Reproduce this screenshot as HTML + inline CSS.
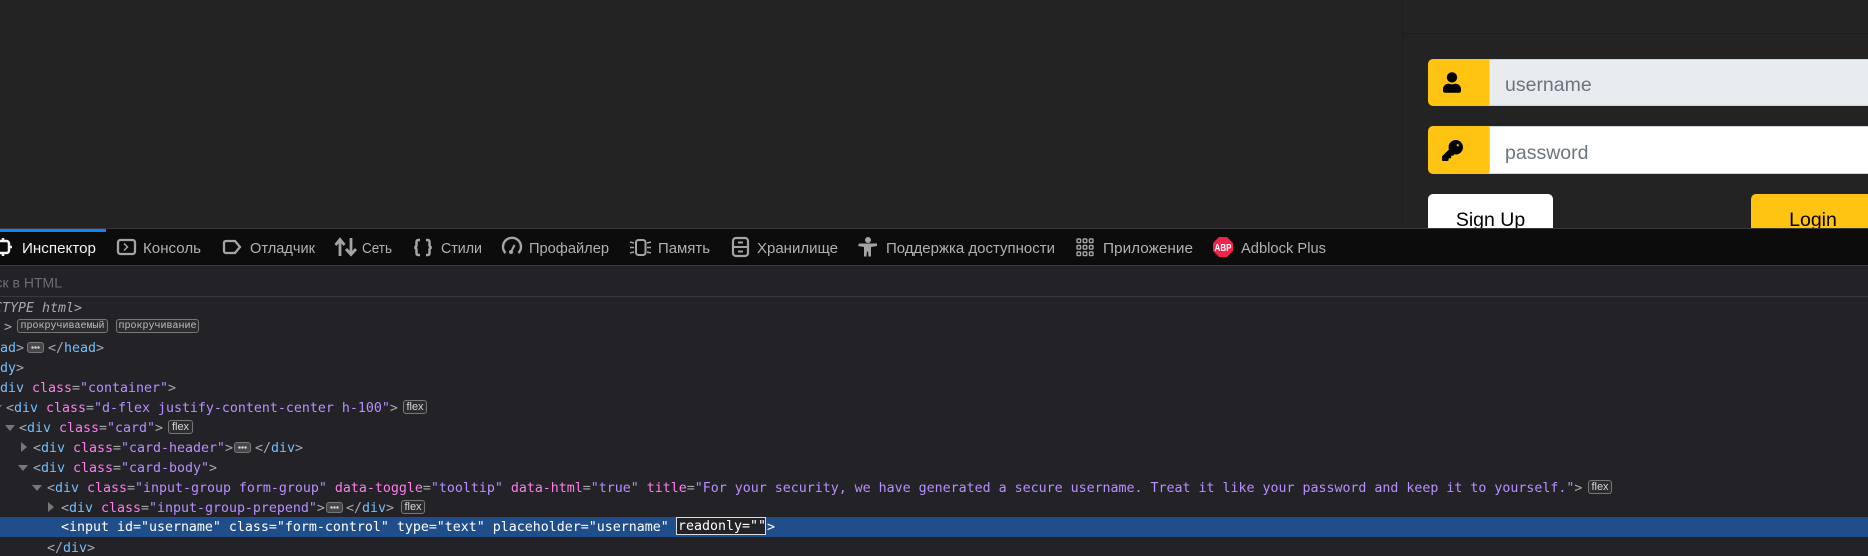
<!DOCTYPE html>
<html><head><meta charset="utf-8"><style>
html,body{margin:0;padding:0;background:#232323;width:1868px;height:556px;overflow:hidden}
#p{position:relative;width:1868px;height:556px;overflow:hidden;font-family:"Liberation Sans",sans-serif}
.a{position:absolute}
.tb{position:absolute;left:0;top:229px;width:1868px;height:36px;background:#0c0c0d;border-bottom:1px solid #38383d;box-sizing:content-box}
.r{position:absolute;height:20px;margin-top:1px;font:13.29px/20px "DejaVu Sans Mono",monospace;white-space:pre;color:#a9a9ac}
.t{color:#75bfff}.n{color:#ff7de9}.v{color:#b98eff}
.b{position:absolute;box-sizing:border-box;border:1px solid #77777a;border-radius:3px;background:#2c2c30;color:#d8d8da;font:11px/13px "Liberation Sans",sans-serif;text-align:center;height:14px}
.m{font:10px/14px "Liberation Mono",monospace;color:#bdbdbf}
.d{position:absolute;box-sizing:border-box;width:17px;height:11px;border:1px solid #77777a;border-radius:3px;background:#47474b}
.d:before{content:"";position:absolute;left:3px;top:3px;width:9px;height:3px;background:radial-gradient(circle at 1.5px 1.5px,#ddd 1.2px,transparent 1.3px) 0 0/3px 3px repeat-x}
.ar{position:absolute;width:0;height:0}
.dn{border-left:5px solid transparent;border-right:5px solid transparent;border-top:6px solid #77777a}
.rt{border-top:5px solid transparent;border-bottom:5px solid transparent;border-left:6px solid #77777a}
</style></head><body><div id="p">
<div class="a" style="left:1402px;top:0;width:1px;height:229px;background:#1e1e1e"></div>
<div class="a" style="left:1402px;top:33px;width:466px;height:1px;background:#1e1e1e"></div>

<div class="a" style="left:1428px;top:59px;width:61px;height:47px;background:#ffc312;border-radius:5px 0 0 5px"></div>
<div class="a" style="left:1489px;top:59px;width:379px;height:47px;background:#e9ecef;box-sizing:border-box;border:1px solid #ced4da;border-right:0"></div>
<div class="a" style="left:1505px;top:62px;line-height:47px;font-size:19.5px;color:#6c757d">username</div>
<svg class="a" style="left:1443px;top:72px" width="18" height="21" viewBox="0 0 448 512"><path d="M224 256c70.7 0 128-57.3 128-128S294.7 0 224 0 96 57.3 96 128s57.3 128 128 128zm89.6 32h-16.7c-22.2 10.2-46.9 16-72.9 16s-50.6-5.8-72.9-16h-16.7C60.2 288 0 348.2 0 422.4V464c0 26.5 21.5 48 48 48h352c26.5 0 48-21.5 48-48v-41.6c0-74.2-60.2-134.4-134.4-134.4z" fill="#000"/></svg>

<div class="a" style="left:1428px;top:126px;width:61px;height:48px;background:#ffc312;border-radius:5px 0 0 5px"></div>
<div class="a" style="left:1489px;top:126px;width:379px;height:48px;background:#fff;box-sizing:border-box;border:1px solid #ced4da;border-right:0"></div>
<div class="a" style="left:1505px;top:130px;line-height:47px;font-size:19.5px;color:#6c757d">password</div>
<svg class="a" style="left:1442px;top:140px" width="21" height="21" viewBox="0 0 512 512"><path fill-rule="evenodd" d="M512 176.001C512 273.203 433.202 352 336 352c-11.22 0-22.19-1.062-32.827-3.069l-24.012 27.014A23.999 23.999 0 0 1 261.223 384H224v40c0 13.255-10.745 24-24 24h-40v40c0 13.255-10.745 24-24 24H24c-13.255 0-24-10.745-24-24v-78.059c0-6.365 2.529-12.47 7.029-16.971l161.802-161.802C163.108 213.814 160 195.271 160 176 160 78.798 238.797.001 335.999 0 433.488-.001 512 78.511 512 176.001zM356 128a28 28 0 1 0 56 0a28 28 0 1 0-56 0z" fill="#000"/></svg>

<div class="a" style="left:1428px;top:194px;width:125px;height:40px;background:#fff;border-radius:5px;color:#000;font-size:19.5px;line-height:53px;text-align:center">Sign Up</div>
<div class="a" style="left:1751px;top:194px;width:124px;height:40px;background:#ffc312;border-radius:5px 0 0 5px;color:#000;font-size:19.5px;line-height:53px;text-align:center">Login</div>

<div class="a" style="left:0;top:228px;width:1868px;height:1px;background:#38383d"></div>
<div class="tb"></div>
<div class="a" style="left:0;top:229px;width:106px;height:3px;background:#0a84ff"></div>

<svg class="a" style="left:0;top:229px" width="1868" height="36" font-family="Liberation Sans, sans-serif" font-size="14.4" fill="#b1b1b3">
<text x="22" y="24" textLength="74" lengthAdjust="spacingAndGlyphs" fill="#f5f5f5">Инспектор</text>
<text x="143" y="24" textLength="58" lengthAdjust="spacingAndGlyphs">Консоль</text>
<text x="250" y="24" textLength="65" lengthAdjust="spacingAndGlyphs">Отладчик</text>
<text x="362" y="24" textLength="30" lengthAdjust="spacingAndGlyphs">Сеть</text>
<text x="441" y="24" textLength="41" lengthAdjust="spacingAndGlyphs">Стили</text>
<text x="529" y="24" textLength="80" lengthAdjust="spacingAndGlyphs">Профайлер</text>
<text x="658" y="24" textLength="52" lengthAdjust="spacingAndGlyphs">Память</text>
<text x="757" y="24" textLength="81" lengthAdjust="spacingAndGlyphs">Хранилище</text>
<text x="886" y="24" textLength="169" lengthAdjust="spacingAndGlyphs">Поддержка доступности</text>
<text x="1103" y="24" textLength="90" lengthAdjust="spacingAndGlyphs">Приложение</text>
<text x="1241" y="24" textLength="85" lengthAdjust="spacingAndGlyphs">Adblock Plus</text>
<g fill="none" stroke="#f5f5f5" stroke-width="2.5">
<rect x="-3" y="12" width="12" height="12" rx="2.500"/><path d="M3 9v3M3 24v3M9 18h3"/>
</g>
<g fill="none" stroke="#a4a4a6" stroke-width="2.3">
<rect x="118" y="11" width="17" height="14" rx="2.500"/><path d="M124 14.500l3.500 3.500-3.500 3.500" stroke-width="1.500"/>
<path d="M224 14a2 2 0 0 1 2-2h9l5 6-5 6h-9a2 2 0 0 1-2-2z"/>
<g stroke-width="2.800"><path d="M340 27V11M335.500 16l4.500-5.500 4.500 5.500M351 9v16M346 20l5 5.500 5-5.500"/></g>
<g stroke-width="2.500"><path d="M420 11h-1.500q-2 0-2 2v3q0 2-2 2.500 2 .5 2 2.500v3q0 2 2 2h1.500M426 11h1.500q2 0 2 2v3q0 2 2 2.500-2 .5-2 2.500v3q0 2-2 2h-1.500"/></g>
<path d="M505.500 24a9 9 0 1 1 13 0" stroke-width="2.400"/><path d="M511 23l3.500-7" stroke-width="2"/><circle cx="511" cy="23" r="2" fill="#a4a4a6" stroke="none"/>
<rect x="636" y="11" width="9.500" height="15" rx="2.500" stroke-width="2"/><path d="M630 13l4 1M630 18.500h4M630 24l4-1M647 14l4-1M647 18.500h4M647 23l4 1" stroke-width="1.500"/>
<rect x="733" y="9" width="15" height="18" rx="3" stroke-width="2.200"/><path d="M733 18h15M738 13.500h5M738 22.500h5" stroke-width="2"/>
<g stroke="none" fill="#a4a4a6"><circle cx="868" cy="11" r="3"/><path d="M859 14.500h18v2.500l-6 1v9.500h-2.500l-.5-5h-1l-.5 5h-2.500v-9.500l-6-1z"/></g>
<g stroke-width="1.400"><rect x="1077" y="10" width="3.600" height="3.600" rx=".8"/><rect x="1083.200" y="10" width="3.600" height="3.600" rx=".8"/><rect x="1089.400" y="10" width="3.600" height="3.600" rx=".8"/><rect x="1077" y="16.500" width="3.600" height="3.600" rx=".8"/><rect x="1083.200" y="16.500" width="3.600" height="3.600" rx=".8"/><rect x="1089.400" y="16.500" width="3.600" height="3.600" rx=".8"/><rect x="1077" y="23" width="3.600" height="3.600" rx=".8"/><rect x="1083.200" y="23" width="3.600" height="3.600" rx=".8"/><rect x="1089.400" y="23" width="3.600" height="3.600" rx=".8"/></g>
</g>
<path d="M1219 8h8l6 6v8l-6 6h-8l-6-6v-8z" fill="#ee2448"/>
<text x="1214.500" y="22" font-size="10.500" font-weight="bold" fill="#fff" textLength="17" lengthAdjust="spacingAndGlyphs">ABP</text>
</svg>

<div class="a" style="left:0;top:266px;width:1868px;height:290px;background:#232327"></div>
<div class="a" style="left:0;top:296px;width:1868px;height:1px;background:#38383d"></div>
<svg class="a" style="left:0;top:270px" width="80" height="24" font-family="Liberation Sans, sans-serif" font-size="14" fill="#6e6e72"><text x="62" y="17.500" text-anchor="end">Поиск в HTML</text></svg>

<div class="r" style="left:-38px;top:298px;font-style:italic;color:#a9a9ac">&lt;!DOCTYPE html&gt;</div>
<div class="r" style="left:4px;top:317px">&gt;</div>
<div class="b m" style="left:17px;top:319px;width:91px">прокручиваемый</div>
<div class="b m" style="left:116px;top:319px;width:83px">прокручивание</div>

<div class="r" style="left:-24px;top:338px">&lt;<span class="t">head</span>&gt;</div>
<div class="d" style="left:27px;top:342px"></div>
<div class="r" style="left:48px;top:338px">&lt;/<span class="t">head</span>&gt;</div>

<div class="r" style="left:-24px;top:358px">&lt;<span class="t">body</span>&gt;</div>
<div class="r" style="left:-8px;top:378px">&lt;<span class="t">div</span> <span class="n">class</span>=<span class="v">"container"</span>&gt;</div>
<div class="r" style="left:6px;top:398px">&lt;<span class="t">div</span> <span class="n">class</span>=<span class="v">"d-flex justify-content-center h-100"</span>&gt;</div>
<div class="b" style="left:403px;top:400px;width:24px">flex</div>
<div class="ar dn" style="left:-8px;top:405px"></div>
<div class="ar dn" style="left:5px;top:425px"></div>
<div class="r" style="left:19px;top:418px">&lt;<span class="t">div</span> <span class="n">class</span>=<span class="v">"card"</span>&gt;</div>
<div class="b" style="left:168px;top:420px;width:25px">flex</div>
<div class="ar rt" style="left:21px;top:442px"></div>
<div class="r" style="left:33px;top:438px">&lt;<span class="t">div</span> <span class="n">class</span>=<span class="v">"card-header"</span>&gt;</div>
<div class="d" style="left:234px;top:442px"></div>
<div class="r" style="left:255px;top:438px">&lt;/<span class="t">div</span>&gt;</div>
<div class="ar dn" style="left:18px;top:465px"></div>
<div class="r" style="left:33px;top:458px">&lt;<span class="t">div</span> <span class="n">class</span>=<span class="v">"card-body"</span>&gt;</div>
<div class="ar dn" style="left:32px;top:485px"></div>
<div class="r" style="left:47px;top:478px">&lt;<span class="t">div</span> <span class="n">class</span>=<span class="v">"input-group form-group"</span> <span class="n">data-toggle</span>=<span class="v">"tooltip"</span> <span class="n">data-html</span>=<span class="v">"true"</span> <span class="n">title</span>=<span class="v">"For your security, we have generated a secure username. Treat it like your password and keep it to yourself."</span>&gt;</div>
<div class="b" style="left:1588px;top:480px;width:24px">flex</div>
<div class="ar rt" style="left:48px;top:502px"></div>
<div class="r" style="left:61px;top:498px">&lt;<span class="t">div</span> <span class="n">class</span>=<span class="v">"input-group-prepend"</span>&gt;</div>
<div class="d" style="left:326px;top:502px"></div>
<div class="r" style="left:346px;top:498px">&lt;/<span class="t">div</span>&gt;</div>
<div class="b" style="left:401px;top:500px;width:24px">flex</div>

<div class="a" style="left:0;top:517px;width:1868px;height:20px;background:#204e8a"></div>
<div class="r" style="left:61px;top:517px;color:#fff">&lt;input id="username" class="form-control" type="text" placeholder="username"</div>
<div class="a" style="left:676px;top:517px;width:90px;height:18px;box-sizing:border-box;border:1px solid #ddd;background:#232327"></div>
<div class="r" style="left:678px;top:516px;color:#fff">readonly=""</div>
<div class="r" style="left:767px;top:517px;color:#fff">&gt;</div>
<div class="r" style="left:47px;top:538px">&lt;/<span class="t">div</span>&gt;</div>
</div></body></html>
